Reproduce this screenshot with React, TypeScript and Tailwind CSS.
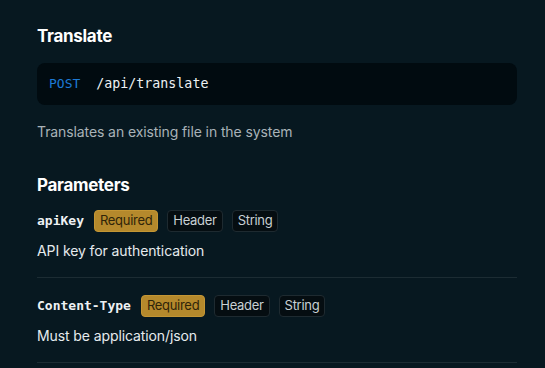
export default function App() {
  const params = [
    { name: 'apiKey', desc: 'API key for authentication' },
    { name: 'Content-Type', desc: 'Must be application/json' },
  ];

  return (
    <div
      className="w-[545px] h-[368px] overflow-hidden bg-[#071820] pl-[37px] pr-[28px] pt-[24px] text-[#e6ebee]"
      style={{ fontFamily: 'Inter, "Noto Sans", sans-serif' }}
    >
      <h1 className="text-[17px] font-bold leading-[24px] tracking-[-0.3px] text-white">Translate</h1>

      <div className="mt-[15px] h-[42px] rounded-[8px] bg-[#010b10] px-[12px] flex items-center gap-[16px] text-[13px] font-['DejaVu_Sans_Mono',monospace]">
        <span className="text-[#1d7ad6]">POST</span>
        <span className="text-[#eef1f3] text-[13.3px]">/api/translate</span>
      </div>

      <p className="mt-[17px] text-[14px] leading-[20px] tracking-[-0.1px] text-[#a9b3b8]">
        Translates an existing file in the system
      </p>

      <h2 className="mt-[31px] text-[17px] font-bold leading-[24px] tracking-[-0.3px] text-white">Parameters</h2>

      <div className="mt-[13px]">
        {params.map((p) => (
          <div key={p.name} className="border-b border-[#1c2c33] pb-[16px] mb-[17px]">
            <div className="flex items-center gap-[9px] h-[22px]">
              <span className="mr-[1px] text-[13px] font-bold text-[#eef1f3] font-['DejaVu_Sans_Mono',monospace]">
                {p.name}
              </span>
              <span className="h-[22px] px-[5px] flex items-center rounded-[4px] bg-[#b5892c] border border-[#c49634] text-[13px] tracking-[-0.3px] text-[#2f2409]">
                Required
              </span>
              <span className="h-[22px] px-[5px] flex items-center rounded-[4px] bg-[#050d11] border border-[#1e2a30] text-[13px] tracking-[-0.3px] text-[#c9d0d4]">
                Header
              </span>
              <span className="h-[22px] px-[5px] flex items-center rounded-[4px] bg-[#050d11] border border-[#1e2a30] text-[13px] tracking-[-0.3px] text-[#c9d0d4]">
                String
              </span>
            </div>
            <p className="mt-[9px] text-[14px] leading-[20px] tracking-[-0.1px] text-[#e6ebee]">{p.desc}</p>
          </div>
        ))}
      </div>
    </div>
  );
}
